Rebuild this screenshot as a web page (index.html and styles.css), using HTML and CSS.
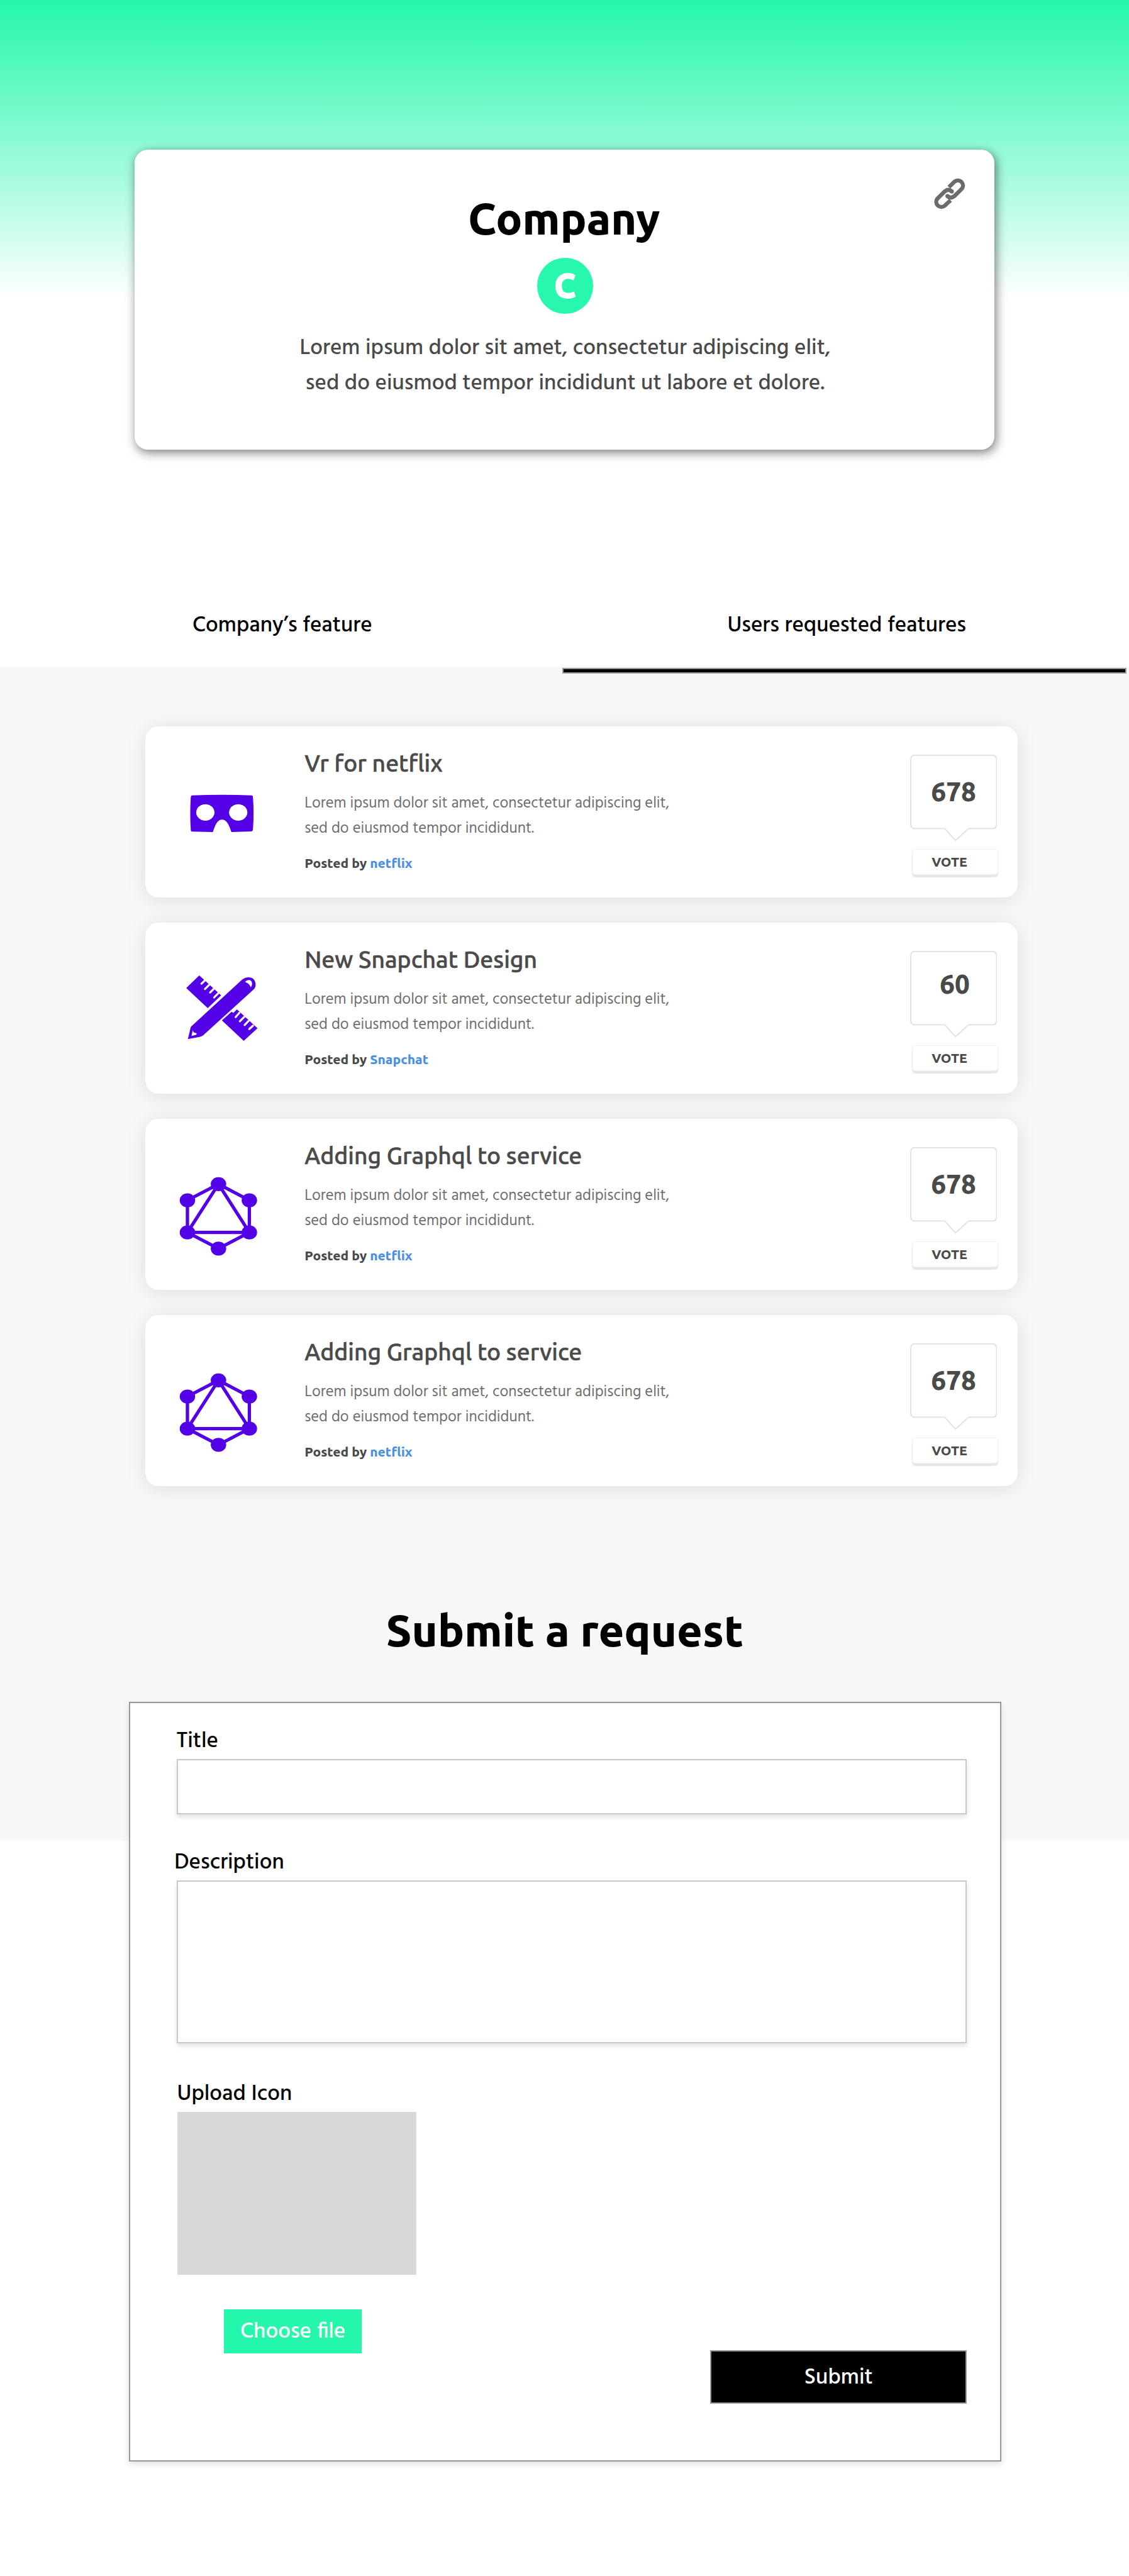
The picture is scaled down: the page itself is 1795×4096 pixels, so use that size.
FILE: index.html
```
<!DOCTYPE html>
<html lang="en">
<head>
<meta charset="utf-8">
<title>Company</title>
<link rel="stylesheet" href="styles.css">
</head>
<body>
<svg class="sprite" aria-hidden="true">
  <symbol id="vr" viewBox="0 0 480 390">
    <path fill="#5400e6" fill-rule="evenodd" d="M86 98Q250 92 413 98Q417 99 418 105Q425 195 418 286Q417 293 411 294L301 298C288 258 275 230 250 230C225 230 213 258 200 298L86 295Q81 294 80 288Q74 195 80 106Q81 99 86 98ZM159 146a50 45 0 1 0 .1 0ZM338 146a50 45 0 1 0 .1 0Z"/>
  </symbol>
  <symbol id="design" viewBox="0 0 480 480">
    <path fill="#5400e6" d="M126 58L148 78L245 167L172 236L55 127ZM302 256L312 262L331 243L443 346L368 414L249 303Z"/>
    <path stroke="#fff" stroke-width="11" stroke-linecap="round" fill="none" d="M158 84L138 103M181 108L157 132M204 132L185 151M229 155L207 178M344 262L324 285M371 284L347 308M394 306L373 328M418 332L398 350"/>
    <path fill="#5400e6" d="M64 405L80 338L356 84C378 64 412 64 425 83C437 100 434 122 424 133L150 382Q142 390 128 393Z"/>
    <path fill="#fff" d="M375 94C388 80 404 80 411 92C416 104 412 116 406 122C401 108 391 98 375 94ZM90 358L96 368L112 373L110 381L84 388Z"/>
  </symbol>
  <symbol id="graph" viewBox="0 0 510 510">
    <g fill="none" stroke="#5400e6" stroke-width="18">
      <path d="M258 85L89 173V348L258 436L426 348V173Z"/>
      <path d="M258 85L89 348H426Z"/>
    </g>
    <g fill="#5400e6">
      <ellipse cx="258" cy="85" rx="42" ry="38"/><ellipse cx="89" cy="173" rx="42" ry="38"/>
      <ellipse cx="426" cy="173" rx="42" ry="38"/><ellipse cx="89" cy="348" rx="42" ry="38"/>
      <ellipse cx="426" cy="348" rx="42" ry="38"/><ellipse cx="258" cy="436" rx="42" ry="38"/>
    </g>
  </symbol>
  <symbol id="bubble" viewBox="0 0 158 158">
    <path fill="#fff" stroke="#e0e0e0" stroke-width="2" d="M9 1H149Q157 1 157 9V126Q157 134 149 134H106L82.500 155.500L62.500 134H9Q1 134 1 126V9Q1 1 9 1Z"/>
  </symbol>
</svg>

<header class="hero">
  <section class="company">
    <svg class="link" viewBox="0 0 360 300"><g fill="none" stroke="#6b6b6b" stroke-width="22">
      <path d="M187 118L217 89A28 28 0 0 1 257 128L217 167Q196 184 179 166"/>
      <path d="M196 190L165 219A28 28 0 0 1 125 180L165 141Q186 124 203 142"/></g>
      <g fill="#6b6b6b"><circle cx="179" cy="167" r="11"/><circle cx="203" cy="142" r="11"/></g></svg>
    <h1>Company</h1>
    <div class="logo">C</div>
    <p>Lorem ipsum dolor sit amet, consectetur adipiscing elit,<br>sed do eiusmod tempor incididunt ut labore et dolore.</p>
  </section>
</header>

<nav class="tabs">
  <a>Company’s feature</a>
  <a>Users requested features</a>
</nav>

<main>
  <div class="marker"></div>
  <div class="list">
    <article class="card">
      <div class="icon"><svg class="vr"><use href="#vr"/></svg></div>
      <div class="text"><h2>Vr for netflix</h2><p>Lorem ipsum dolor sit amet, consectetur adipiscing elit,<br>sed do eiusmod tempor incididunt.</p><div class="by">Posted by <a>netflix</a></div></div>
      <div class="vote"><div class="bubble"><svg><use href="#bubble"/></svg><span>678</span></div><button>VOTE</button></div>
    </article>
    <article class="card">
      <div class="icon"><svg class="design"><use href="#design"/></svg></div>
      <div class="text"><h2>New Snapchat Design</h2><p>Lorem ipsum dolor sit amet, consectetur adipiscing elit,<br>sed do eiusmod tempor incididunt.</p><div class="by">Posted by <a>Snapchat</a></div></div>
      <div class="vote"><div class="bubble raised"><svg><use href="#bubble"/></svg><span>60</span></div><button>VOTE</button></div>
    </article>
    <article class="card">
      <div class="icon"><svg class="graph"><use href="#graph"/></svg></div>
      <div class="text"><h2>Adding Graphql to service</h2><p>Lorem ipsum dolor sit amet, consectetur adipiscing elit,<br>sed do eiusmod tempor incididunt.</p><div class="by">Posted by <a>netflix</a></div></div>
      <div class="vote"><div class="bubble"><svg><use href="#bubble"/></svg><span>678</span></div><button>VOTE</button></div>
    </article>
    <article class="card">
      <div class="icon"><svg class="graph"><use href="#graph"/></svg></div>
      <div class="text"><h2>Adding Graphql to service</h2><p>Lorem ipsum dolor sit amet, consectetur adipiscing elit,<br>sed do eiusmod tempor incididunt.</p><div class="by">Posted by <a>netflix</a></div></div>
      <div class="vote"><div class="bubble"><svg><use href="#bubble"/></svg><span>678</span></div><button>VOTE</button></div>
    </article>
  </div>

  <h1 class="heading">Submit a request</h1>
  <form class="request">
    <label for="title">Title</label>
    <input id="title" type="text">
    <label class="desc" for="desc">Description</label>
    <textarea id="desc"></textarea>
    <div class="bottom">
      <div class="upload">
        <label>Upload Icon</label>
        <div class="preview"></div>
        <button type="button" class="choose">Choose file</button>
      </div>
      <button type="button" class="submit">Submit</button>
    </div>
  </form>
</main>
</body>
</html>
```
FILE: styles.css
```
/* 1rem = 100 design units */
html { font-size: 87.64px; }
* { box-sizing: border-box; margin: 0; padding: 0; }
body {
  background: #fff;
  color: #000;
  font-family: Hind, "Noto Sans", sans-serif;
  font-weight: 500;
  font-size: .4rem;
  overflow-x: hidden;
}
h1, h2, .by, .vote, .logo { font-family: Ubuntu, "Noto Sans", sans-serif; }
button { border: 0; font: inherit; color: inherit; }
svg { display: block; }
.sprite { position: absolute; width: 0; height: 0; }

h1 { font-size: .8rem; line-height: .8rem; font-weight: 800; text-align: center; }

.hero {
  height: 10.6rem;
  padding: 2.72rem 2.44rem 0;
  background: linear-gradient(#24f7ab, #fff) no-repeat 0 0 / 100% 5.42rem;
}
.company {
  position: relative;
  height: 5.44rem;
  padding: .84rem 0 0 .02rem;
  display: flex;
  flex-direction: column;
  align-items: center;
  background: #fff;
  border-radius: .24rem;
  box-shadow: .03rem .05rem .18rem rgba(0, 0, 0, .5);
}
.company h1 { font-size: .795rem; margin-right: .04rem; }
.link { position: absolute; left: 14.15rem; top: .28rem; width: 1.2rem; height: 1rem; }
.logo {
  width: 1.01rem;
  height: 1.01rem;
  margin: .32rem 0 .31rem;
  border-radius: 50%;
  background: #28f7ae;
  color: #fff;
  font-size: .6rem;
  font-weight: 800;
  -webkit-text-stroke: .02rem #fff;
  line-height: 1.01rem;
  text-align: center;
}
.company p { color: #4a4a4a; line-height: .64rem; text-align: center; white-space: nowrap; }

.tabs { display: grid; grid-template-columns: 10.24rem 1fr; height: 1.5rem; line-height: 1.52rem; text-align: center; }

main {
  height: 34.63rem;
  padding-top: .02rem;
  background: linear-gradient(#f8f8f8, #f8f8f8) no-repeat 0 0 / 100% 21.3rem;
}
.marker { width: 10.24rem; height: .1rem; margin-left: 10.2rem; background: #000; border: 2px solid #979797; }

.list { display: grid; gap: .46rem; width: 15.82rem; margin: .96rem 0 0 2.64rem; }
.card {
  display: grid;
  grid-template-columns: 2.885rem 1fr 1.95rem;
  height: 3.1rem;
  background: #fff;
  border-radius: .24rem;
  box-shadow: 0 .04rem .36rem rgba(0, 0, 0, .11);
}
.vr { width: 1.6rem; height: 1.3rem; margin: .92rem 0 0 .56rem; }
.design { width: 1.6rem; height: 1.6rem; margin: .76rem 0 0 .56rem; }
.graph { width: 1.7rem; height: 1.7rem; margin: .9rem 0 0 .46rem; }
.text { padding-top: .37rem; color: #4a4a4a; }
.text h2 { font-size: .426rem; line-height: .6rem; font-weight: 500; -webkit-text-stroke: .006rem #4a4a4a; }
.text p { margin: .2rem 0 .24rem; font-size: .28rem; line-height: .46rem; font-weight: 400; color: #6f6f6f; }
.by { font-size: .24rem; line-height: .31rem; font-weight: 800; }
.by a { color: #4a90e2; }
.vote { padding-top: .51rem; color: #4a4a4a; font-weight: 800; }
.bubble { position: relative; width: 1.58rem; height: 1.72rem; text-align: center; font-size: .48rem; line-height: 1.34rem; }
.bubble svg { position: absolute; left: 0; top: 0; width: 1.58rem; height: 1.58rem; }
.bubble span { position: relative; }
.raised { line-height: 1.2rem; padding-left: .04rem; }
.vote button {
  display: block;
  width: 1.57rem;
  height: .46rem;
  margin-left: .03rem;
  padding-left: .35rem;
  border: .02rem solid #efefef;
  border-radius: .06rem;
  background: #fff;
  box-shadow: 0 .04rem .015rem #e8e8e8;
  font-size: .24rem;
  line-height: .44rem;
  text-align: left;
}

.heading { margin: 2.22rem 0 .9rem; padding-left: .01rem; }
.request {
  width: 15.82rem;
  height: 13.78rem;
  margin-left: 2.34rem;
  padding: .445rem .6rem 0 .84rem;
  background: #fff;
  border: 2px solid #979797;
  box-shadow: 0 .04rem .12rem rgba(0, 0, 0, .12);
}
label { display: block; height: .5rem; line-height: .51rem; margin-bottom: .07rem; white-space: nowrap; }
input, textarea {
  display: block;
  width: 14.34rem;
  border: 2px solid #c8c8c8;
  background: #fff;
  box-shadow: 0 .04rem .08rem rgba(0, 0, 0, .12);
  resize: none;
}
input { height: 1rem; }
textarea { height: 2.96rem; }
.desc { margin-top: .63rem; text-indent: -.04rem; }
.bottom { display: flex; justify-content: space-between; align-items: flex-end; width: 14.34rem; height: 5.87rem; margin-top: .67rem; }
.upload { align-self: flex-start; padding-left: .02rem; }
.upload label { text-indent: -.01rem; }
.preview { width: 4.33rem; height: 2.96rem; background: #d8d8d8; }
.choose { display: block; width: 2.5rem; height: .8rem; margin: .62rem 0 0 .84rem; background: #24f7ab; color: #fff; line-height: .84rem; }
.submit { width: 4.66rem; height: .98rem; background: #000; border: 2px solid #979797; color: #fff; line-height: .98rem; }
```
